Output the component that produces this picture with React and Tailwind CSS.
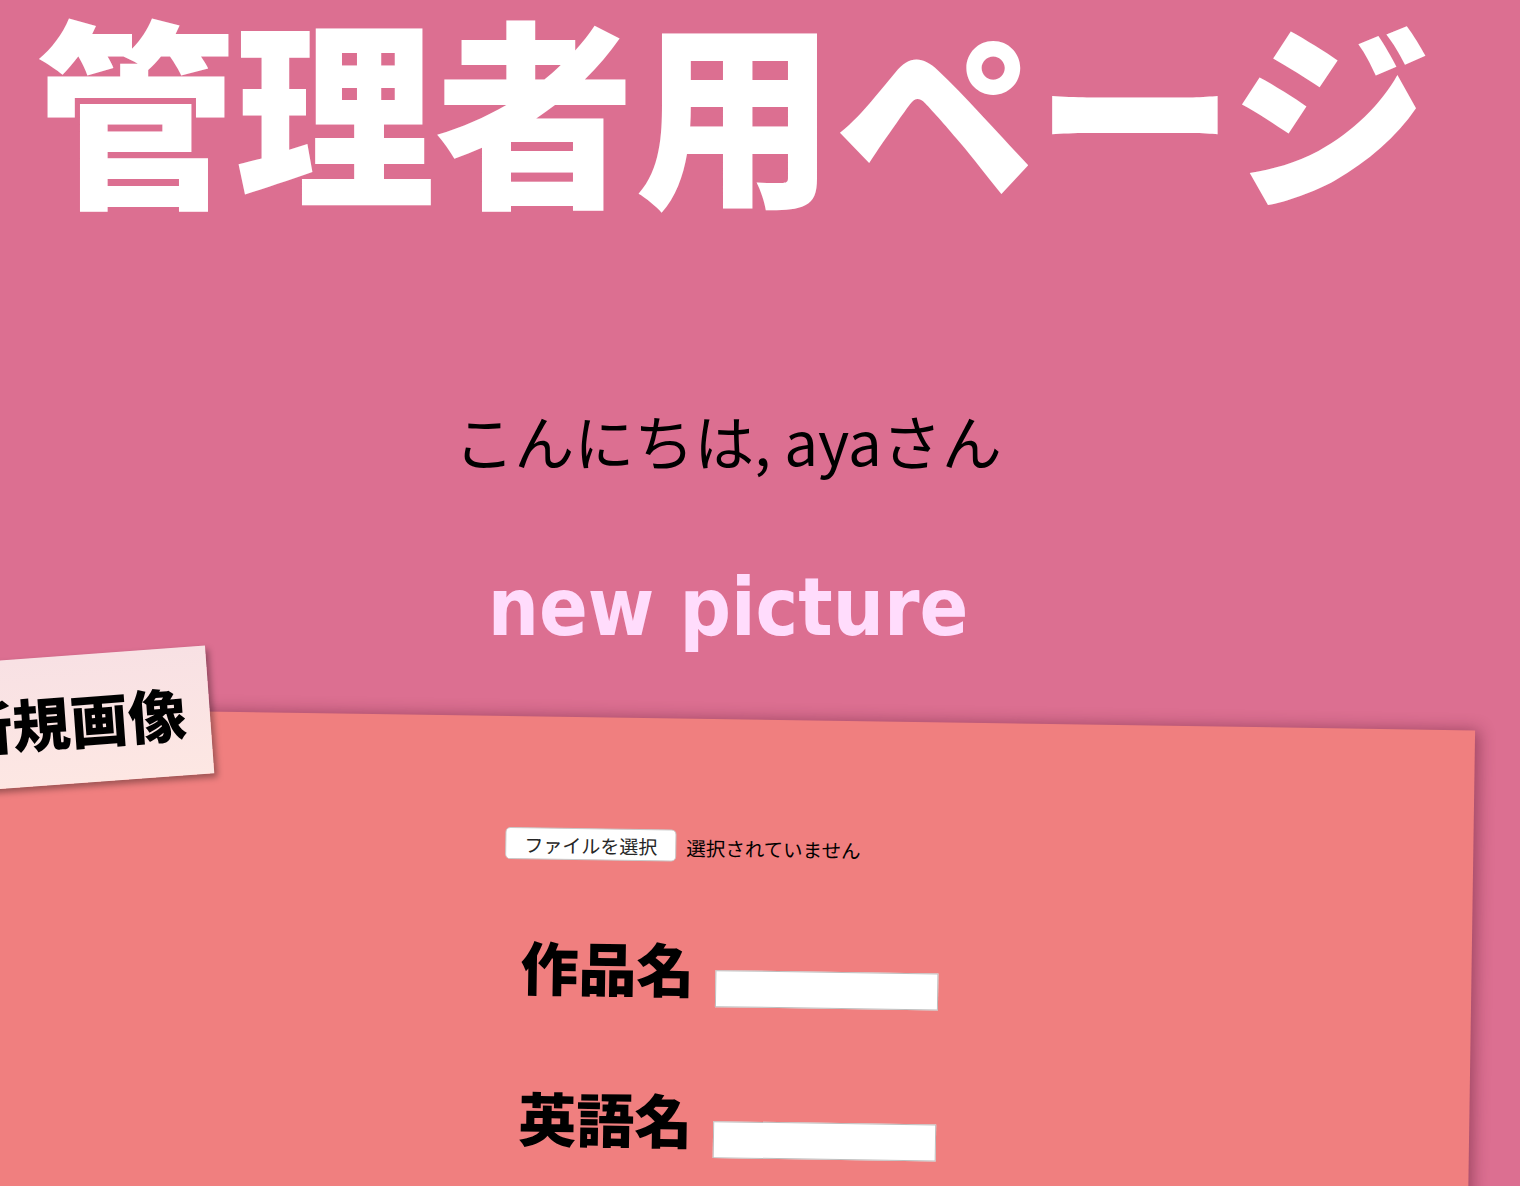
import React from 'react'

const jp = { fontFamily: '"Noto Sans CJK JP", "Noto Sans", sans-serif' }

const FileRow = () => {
  return (
    <div className="w-[446px] mx-auto -translate-x-[3px] flex items-center gap-[10px]">
      <button
        type="button"
        className="h-[32px] w-[171px] bg-white border border-[#c9c9c9] rounded-[5px] text-[19px] leading-none text-[#262626]"
      >
        ファイルを選択
      </button>
      <span className="mt-[4px] text-[19.5px] leading-none text-black">選択されていません</span>
    </div>
  )
}

const Field = ({ label, className = '' }) => {
  return (
    <div className={`flex justify-center items-start gap-[21px] ${className}`}>
      <label className="text-[58px] leading-[58px] font-black text-black">{label}</label>
      <input
        type="text"
        className="mt-[31px] w-[223px] h-[37px] bg-white border border-[#bdbdbd] outline-none"
      />
    </div>
  )
}

export default function App() {
  return (
    <div className="relative h-[1186px] overflow-hidden bg-[#dc6f91]" style={jp}>
      <h1 className="pl-[35px] pt-[5px] text-[200px] leading-[200px] font-black text-white whitespace-nowrap">
        管理者用ページ
      </h1>

      <p className="mt-[205px] pr-[64px] text-center text-[60px] leading-[60px] text-black">
        こんにちは, ayaさん
      </p>

      <h2
        className="mt-[98px] pr-[64px] text-center text-[80px] leading-[80px] font-bold text-[#ffdcfc]"
        style={{ fontFamily: '"DejaVu Sans Condensed", "DejaVu Sans", sans-serif' }}
      >
        new picture
      </h2>

      <div className="mt-[71px] -ml-[60px] w-[1530px] h-[700px] pl-[46px] pt-[111px] bg-[#f07f7f] rotate-[0.85deg] shadow-[4px_0_16px_rgba(80,20,40,0.45)]">
        <FileRow />
        <Field label="作品名" className="mt-[77px]" />
        <Field label="英語名" className="mt-[83px]" />
      </div>

      <div className="absolute left-[-80px] top-[656px] w-[290px] h-[128px] flex items-center justify-end pr-[24px] bg-gradient-to-b from-[#f8e1e4] to-[#fde7e3] -rotate-[4.2deg] shadow-[3px_4px_6px_rgba(0,0,0,0.35)]">
        <span className="text-[58px] leading-none font-black text-black whitespace-nowrap">新規画像</span>
      </div>
    </div>
  )
}
